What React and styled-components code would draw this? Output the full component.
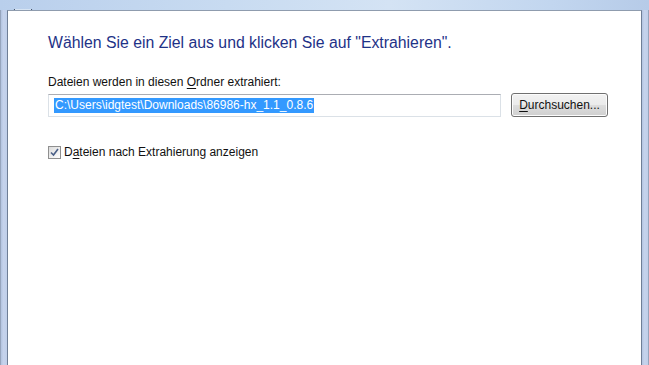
import React from 'react';
import styled, { createGlobalStyle } from 'styled-components';

const GlobalStyle = createGlobalStyle`
  html, body {
    margin: 0;
    padding: 0;
    background: #c3d5ee;
  }
  body {
    font-family: "Liberation Sans", Arial, sans-serif;
  }
`;

const Window = styled.div`
  width: 649px;
  height: 365px;
  display: flex;
  flex-direction: column;
  overflow: hidden;
`;

const TopBar = styled.div`
  height: 10px;
  flex: none;
  padding-left: 13px;
  background: linear-gradient(90deg, #b9cfec 0%, #c8dbf1 35%, #d4e3f4 60%, #c2d6ef 85%, #b6cbe8 100%);
`;

const Body = styled.div`
  flex: 1;
  display: flex;
`;

const Edge = styled.div`
  width: 7px;
  flex: none;
  box-sizing: border-box;
  background: linear-gradient(90deg, #b3c4e0 0%, #c6d3ec 40%, #c0cfe9 100%);
  border-${p => (p.$side === 'left' ? 'left' : 'right')}: 1px solid #97a5bd;
`;

const Panel = styled.div`
  flex: 1;
  background: #fff;
  border-top: 1px solid #8f9cae;
  border-left: 1px solid #6f7e96;
  border-right: 1px solid #6f7e96;
  padding: 21px 0 0 40px;
`;

const Title = styled.h1`
  margin: 0;
  font-family: "Liberation Sans", Arial, sans-serif;
  font-weight: normal;
  font-size: 15.8px;
  line-height: 21px;
  color: #1e3287;
`;

const Label = styled.div`
  margin-top: 21px;
  font-size: 12px;
  line-height: 16px;
  color: #111;
`;

const Row = styled.div`
  margin-top: 3px;
  display: flex;
  align-items: center;
  gap: 10px;
`;

const PathField = styled.div`
  width: 453px;
  height: 23px;
  box-sizing: border-box;
  border: 1px solid #dbe1e7;
  border-top-color: #abadb3;
  display: flex;
  align-items: center;
  padding-left: 5px;
`;

const Selection = styled.span`
  background: #3399ff;
  color: #fff;
  font-size: 12px;
  line-height: 15px;
  padding: 0 1px;
`;

const Button = styled.button`
  width: 97px;
  height: 24px;
  box-sizing: border-box;
  border: 1px solid #707070;
  border-radius: 3px;
  background: linear-gradient(180deg, #f2f2f2 0%, #ebebeb 48%, #dddddd 52%, #cfcfcf 100%);
  box-shadow: inset 0 0 0 1px #fcfcfc;
  font-family: "Liberation Sans", Arial, sans-serif;
  font-size: 12px;
  color: #111;
  padding: 0;
`;

const CheckRow = styled.label`
  margin-top: 28px;
  display: flex;
  align-items: center;
  gap: 3px;
  font-size: 12px;
  color: #111;
`;

const Box = styled.span`
  width: 13px;
  height: 13px;
  box-sizing: border-box;
  border: 1px solid #8f8f8f;
  background: linear-gradient(135deg, #dcdcdc 0%, #f4f4f4 70%, #ffffff 100%);
  display: flex;
  align-items: center;
  justify-content: center;
`;

const Key = styled.u`
  text-decoration-thickness: 1px;
  text-underline-offset: 2px;
`;

const App = () => (
  <>
    <GlobalStyle />
    <Window>
      <TopBar>
        <svg width="20" height="5" viewBox="0 0 20 5">
          <path d="M1 -1 A9 6 0 0 0 19 -1" fill="#d7e4f3" stroke="#3f4d63" strokeWidth="1" />
        </svg>
      </TopBar>
      <Body>
        <Edge $side="left" />
        <Panel>
          <Title>Wählen Sie ein Ziel aus und klicken Sie auf "Extrahieren".</Title>
          <Label>
            Dateien werden in diesen <Key>O</Key>rdner extrahiert:
          </Label>
          <Row>
            <PathField>
              <Selection>C:\Users\idgtest\Downloads\86986-hx_1.1_0.8.6</Selection>
            </PathField>
            <Button>
              <Key>D</Key>urchsuchen...
            </Button>
          </Row>
          <CheckRow>
            <Box>
              <svg width="9" height="9" viewBox="0 0 9 9">
                <path d="M1 4.5 L3.5 7 L8 1" fill="none" stroke="#4a5f87" strokeWidth="1.6" />
              </svg>
            </Box>
            <span>
              D<Key>a</Key>teien nach Extrahierung anzeigen
            </span>
          </CheckRow>
        </Panel>
        <Edge $side="right" />
      </Body>
    </Window>
  </>
);

export default App;
